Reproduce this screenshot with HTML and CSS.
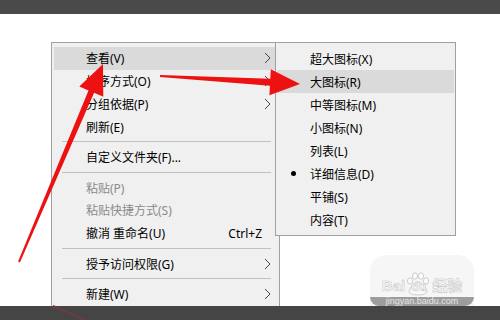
FILE: index.html
```html
<!DOCTYPE html>
<html lang="zh-CN">
<head>
    <meta charset="UTF-8">
    <title>查看菜单</title>
    <link rel="stylesheet" href="styles.css">
</head>
<body>
<div class="topbar"></div>
<div class="stage">
    <!-- 右键主菜单 -->
    <div class="menu main">
        <div class="item hover"><span>查看(V)</span><svg class="chev" width="7" height="12"><path d="M1 1 L6 6 L1 11"/></svg></div>
        <div class="item"><span>排序方式(O)</span><svg class="chev" width="7" height="12"><path d="M1 1 L6 6 L1 11"/></svg></div>
        <div class="item"><span>分组依据(P)</span><svg class="chev" width="7" height="12"><path d="M1 1 L6 6 L1 11"/></svg></div>
        <div class="item"><span>刷新(E)</span></div>
        <div class="sep"></div>
        <div class="item"><span>自定义文件夹(F)...</span></div>
        <div class="sep"></div>
        <div class="item off"><span>粘贴(P)</span></div>
        <div class="item off"><span>粘贴快捷方式(S)</span></div>
        <div class="item"><span>撤消 重命名(U)</span><span class="key">Ctrl+Z</span></div>
        <div class="sep"></div>
        <div class="item"><span>授予访问权限(G)</span><svg class="chev" width="7" height="12"><path d="M1 1 L6 6 L1 11"/></svg></div>
        <div class="sep"></div>
        <div class="item"><span>新建(W)</span><svg class="chev" width="7" height="12"><path d="M1 1 L6 6 L1 11"/></svg></div>
    </div>
    <!-- 查看 子菜单 -->
    <div class="menu sub">
        <div class="item">超大图标(X)</div>
        <div class="item hover">大图标(R)</div>
        <div class="item">中等图标(M)</div>
        <div class="item">小图标(N)</div>
        <div class="item">列表(L)</div>
        <div class="item"><i class="dot"></i>详细信息(D)</div>
        <div class="item">平铺(S)</div>
        <div class="item">内容(T)</div>
    </div>
    <div class="watermark">
        <div class="wm-logo">
            <span>Bai</span>
            <span class="du">
                <svg class="paw" width="26" height="24" viewBox="0 0 26 24">
                    <ellipse cx="5" cy="9" rx="2.6" ry="3.2"/>
                    <ellipse cx="10" cy="4" rx="2.6" ry="3.2"/>
                    <ellipse cx="16" cy="4" rx="2.6" ry="3.2"/>
                    <ellipse cx="21" cy="9" rx="2.6" ry="3.2"/>
                    <path d="M4 19 Q8 10 13 10 Q18 10 22 19 Q22 23 13 23 Q4 23 4 19 Z"/>
                </svg>
                <b>du</b>
            </span>
            <span>经验</span>
        </div>
        <div class="wm-url">jingyan.baidu.com</div>
    </div>
</div>
<div class="bottombar"></div>

<!-- 红色标注箭头 -->
<svg class="marks" width="500" height="320" viewBox="0 0 500 320">
    <line x1="53" y1="306" x2="85" y2="320" stroke="#6a3e3e" stroke-width="2"/>
    <polygon fill="#ee1111" points="18.1,261.6 88.5,90.4 79.3,86.5 103,64 103.3,96.7 94.1,92.8 19.9,262.4"/>
    <polygon fill="#ee1111" points="160,75 270.3,78.8 270.8,69.3 300,84 269.4,95.3 269.9,85.8 160,77"/>
</svg>
</body>
</html>
```

FILE: styles.css
```css
* {
    margin: 0;
    padding: 0;
    box-sizing: border-box;
}

html, body {
    width: 500px;
    height: 320px;
    overflow: hidden;
}

body {
    position: relative;
    display: flex;
    flex-direction: column;
    background: #fff;
    font-family: "Noto Sans", "Noto Sans CJK SC", sans-serif;
    font-size: 12px;
    color: #000;
}

.topbar {
    height: 14px;
    background: #4a4a4a;
}

.bottombar {
    height: 14px;
    background: #454545;
}

.stage {
    position: relative;
    height: 292px;
    display: flex;
    align-items: flex-start;
    padding: 28px 0 0 51px;
    overflow: hidden;
}

.menu {
    background: #f0f0f0;
    border: 1px solid #a0a0a0;
}

.main {
    width: 229px;
    height: 100%;
    border-bottom: none;
    padding: 4px 2px 0;
}

.sub {
    width: 181px;
    margin-left: -5px;
    padding: 4px 1px;
}

.item {
    height: 22.8px;
    display: flex;
    align-items: center;
    padding-left: 32px;
    white-space: nowrap;
}

.sub .item {
    height: 23px;
    padding-left: 33px;
}

.hover {
    background: #dadada;
}

.off {
    color: #8a8a8a;
}

.chev {
    margin-left: auto;
    margin-right: 6.5px;
}

.chev path {
    fill: none;
    stroke: #444;
    stroke-width: 1;
}

.key {
    margin-left: auto;
    margin-right: 15px;
}

.sep {
    height: 1px;
    background: #c2c2c2;
    margin: 3.3px 6px 3.3px 8px;
}

.dot {
    width: 5px;
    height: 5px;
    border-radius: 50%;
    background: #000;
    margin: 0 14px 0 -19px;
}

/* 百度经验水印 */
.watermark {
    position: absolute;
    left: 370px;
    top: 241px;
    width: 104px;
    height: 51px;
    display: flex;
    flex-direction: column;
    justify-content: flex-end;
    align-items: center;
    background: rgba(236, 236, 236, 0.45);
    border-radius: 16px 16px 0 0;
}

.wm-logo {
    display: flex;
    align-items: flex-end;
    font-family: "Liberation Sans", "Noto Sans CJK SC", sans-serif;
    font-weight: bold;
    font-size: 15px;
    line-height: 15px;
    color: #fbfbfb;
    -webkit-text-stroke: 0.6px #c9c9c9;
    margin-bottom: 4px;
}

.du {
    position: relative;
    width: 27px;
    height: 15px;
    text-align: center;
}

.du b {
    position: relative;
    font-size: 12px;
}

.paw {
    position: absolute;
    left: 0;
    bottom: -3px;
}

.paw ellipse, .paw path {
    fill: #fbfbfb;
    stroke: #cdcdcd;
    stroke-width: 1;
}

.wm-url {
    width: 100%;
    height: 9px;
    background: #9d9d9d;
    border-radius: 0 0 10px 10px;
    font-family: "Liberation Sans", sans-serif;
    font-size: 9px;
    line-height: 9px;
    color: #e6e6e6;
    text-align: center;
}

.marks {
    position: absolute;
    left: 0;
    top: 0;
}
```
